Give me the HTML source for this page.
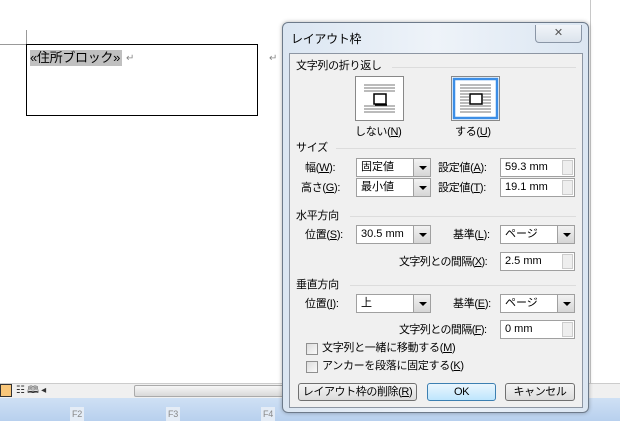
<!DOCTYPE html><html><head><meta charset="utf-8"><style>
*{margin:0;padding:0;box-sizing:border-box}
body{width:620px;height:421px;position:relative;overflow:hidden;background:#fff;font-family:"Liberation Sans","Noto Sans CJK JP",sans-serif;font-size:11px;color:#000}
.a{position:absolute;white-space:nowrap;line-height:14px;letter-spacing:-0.3px}
.l{position:absolute;height:1px;background:#dcdcdc}
.cb{position:absolute;height:19px;border:1px solid #a0a0a0;background:#fff;font-size:11px;line-height:17px;padding-left:4px;white-space:nowrap}
.dd{position:absolute;right:0;top:0;width:17px;height:17px;background:linear-gradient(#f2f2f2,#d6d6d6);border-left:1px solid #a0a0a0}
.dd:after{content:"";position:absolute;left:5px;top:7px;border:4px solid transparent;border-top:4px solid #000;border-bottom:0}
.sp{position:absolute;right:1px;top:1px;width:11px;height:15px;background:#eee;border:1px solid #ccc}
.btn{position:absolute;height:18px;border:1px solid #707070;border-radius:3px;background:linear-gradient(#f4f4f4,#dcdcdc);text-align:center;line-height:16px;font-size:11px;white-space:nowrap;letter-spacing:-0.4px}
.ck{position:absolute;width:12px;height:12px;border:1px solid #8f8f8f;background:linear-gradient(135deg,#ddd,#fafafa)}
u{text-decoration:underline}
</style></head><body>
<div style="position:absolute;left:0;top:44px;width:26px;height:1px;background:#999"></div>
<div style="position:absolute;left:26px;top:30px;width:1px;height:14px;background:#999"></div>
<div style="position:absolute;left:26px;top:44px;width:232px;height:72px;border:1px solid #000"></div>
<div class="a" style="left:30px;top:50px;background:#c0c0c0;font-size:13px;line-height:16px;padding-right:2px">«住所ブロック»</div>
<div class="a" style="left:126px;top:52px;color:#888;font-size:10px">↵</div>
<div class="a" style="left:269px;top:52px;color:#888;font-size:10px">↵</div>
<div style="position:absolute;left:590px;top:0;width:30px;height:383px;background:#fff;border-left:1px solid #c8c8c8"></div>
<div style="position:absolute;left:0;top:383px;width:620px;height:15px;background:#f0f0f0;border-top:1px solid #ccc"></div>
<div style="position:absolute;left:0;top:384px;width:12px;height:13px;background:#f9c77a;border:1px solid #333"></div>
<div class="a" style="left:16px;top:384px;font-size:10px;color:#333">☷ 🕮 ◂</div>
<div style="position:absolute;left:134px;top:385px;width:160px;height:12px;border:1px solid #aaa;border-radius:2px;background:linear-gradient(#f6f6f6,#d8d8d8)"></div>
<div style="position:absolute;left:0;top:398px;width:620px;height:23px;background:linear-gradient(#cfe0f4,#b8d0ee)"></div>
<div class="a" style="left:70px;top:407px;font-size:9px;color:#888;background:#e4ecf6;padding:0 2px">F2</div>
<div class="a" style="left:166px;top:407px;font-size:9px;color:#888;background:#e4ecf6;padding:0 2px">F3</div>
<div class="a" style="left:261px;top:407px;font-size:9px;color:#888;background:#e4ecf6;padding:0 2px">F4</div>
<div style="position:absolute;left:282px;top:22px;width:307px;height:391px;border:1px solid #6d7a8a;border-radius:6px;background:linear-gradient(90deg,#dbe6f2,#eef3f9 50%,#dbe6f2);box-shadow:0 0 4px rgba(0,0,0,.3)"></div>
<div class="a" style="left:291px;top:32px;font-size:12px">レイアウト枠</div>
<div style="position:absolute;left:535px;top:25px;width:47px;height:18px;border:1px solid #8a96a6;border-top:0;border-radius:0 0 4px 4px;background:linear-gradient(#f2f5f9,#dbe3ec);text-align:center;color:#555;font-size:11px;line-height:16px">✕</div>
<div style="position:absolute;left:289px;top:53px;width:294px;height:355px;background:#f0f0f0;border:1px solid #8d96a3"></div>
<div class="a" style="left:296px;top:59px">文字列の折り返し</div><div class="l" style="left:392px;top:67px;width:184px"></div>
<svg style="position:absolute;left:355px;top:76px" width="50" height="46"><rect x="0.5" y="0.5" width="48" height="44" fill="#fff" stroke="#888"/><g stroke="#777"><line x1="9" y1="9" x2="40" y2="9"/><line x1="9" y1="12" x2="40" y2="12"/><line x1="9" y1="15" x2="40" y2="15"/><line x1="9" y1="30" x2="40" y2="30"/><line x1="9" y1="33" x2="40" y2="33"/><line x1="9" y1="36" x2="40" y2="36"/></g><rect x="19" y="18" width="12" height="10" fill="#fff" stroke="#000" stroke-width="1.5"/><line x1="20" y1="29" x2="32" y2="29" stroke="#000" stroke-width="1.5"/></svg>
<svg style="position:absolute;left:451px;top:76px" width="50" height="46"><rect x="0.5" y="0.5" width="48" height="44" fill="#fff" stroke="#888"/><rect x="3" y="3" width="43" height="39" fill="none" stroke="#3c8ee6" stroke-width="2.5"/><g stroke="#777"><line x1="9" y1="9" x2="40" y2="9"/><line x1="9" y1="12" x2="40" y2="12"/><line x1="9" y1="15" x2="40" y2="15"/><line x1="9" y1="18" x2="18" y2="18"/><line x1="32" y1="18" x2="40" y2="18"/><line x1="9" y1="21" x2="18" y2="21"/><line x1="32" y1="21" x2="40" y2="21"/><line x1="9" y1="24" x2="18" y2="24"/><line x1="32" y1="24" x2="40" y2="24"/><line x1="9" y1="27" x2="18" y2="27"/><line x1="32" y1="27" x2="40" y2="27"/><line x1="9" y1="30" x2="40" y2="30"/><line x1="9" y1="33" x2="40" y2="33"/><line x1="9" y1="36" x2="40" y2="36"/></g><rect x="19" y="18" width="12" height="10" fill="#fff" stroke="#000" stroke-width="1.5"/></svg>
<div class="a" style="left:355px;top:125px">しない(<u>N</u>)</div>
<div class="a" style="left:455px;top:125px">する(<u>U</u>)</div>
<div class="a" style="left:296px;top:141px">サイズ</div><div class="l" style="left:336px;top:148px;width:240px"></div>
<div class="a" style="left:305px;top:161px">幅(<u>W</u>):</div>
<div class="cb" style="left:356px;top:158px;width:75px">固定値<div class="dd"></div></div>
<div class="a" style="left:438px;top:161px">設定値(<u>A</u>):</div>
<div class="cb" style="left:500px;top:158px;width:75px">59.3 mm<div class="sp"></div></div>
<div class="a" style="left:301px;top:181px">高さ(<u>G</u>):</div>
<div class="cb" style="left:356px;top:178px;width:75px">最小値<div class="dd"></div></div>
<div class="a" style="left:438px;top:181px">設定値(<u>T</u>):</div>
<div class="cb" style="left:500px;top:178px;width:75px">19.1 mm<div class="sp"></div></div>
<div class="a" style="left:296px;top:209px">水平方向</div><div class="l" style="left:350px;top:216px;width:226px"></div>
<div class="a" style="left:305px;top:228px">位置(<u>S</u>):</div>
<div class="cb" style="left:356px;top:225px;width:75px">30.5 mm<div class="dd"></div></div>
<div class="a" style="left:453px;top:228px">基準(<u>L</u>):</div>
<div class="cb" style="left:500px;top:225px;width:75px">ページ<div class="dd"></div></div>
<div class="a" style="left:399px;top:255px;letter-spacing:-0.6px">文字列との間隔(<u>X</u>):</div>
<div class="cb" style="left:500px;top:252px;width:75px">2.5 mm<div class="sp"></div></div>
<div class="a" style="left:296px;top:278px">垂直方向</div><div class="l" style="left:350px;top:285px;width:226px"></div>
<div class="a" style="left:305px;top:297px">位置(<u>I</u>):</div>
<div class="cb" style="left:356px;top:294px;width:75px">上<div class="dd"></div></div>
<div class="a" style="left:453px;top:297px">基準(<u>E</u>):</div>
<div class="cb" style="left:500px;top:294px;width:75px">ページ<div class="dd"></div></div>
<div class="a" style="left:399px;top:323px;letter-spacing:-0.6px">文字列との間隔(<u>F</u>):</div>
<div class="cb" style="left:500px;top:320px;width:75px">0 mm<div class="sp"></div></div>
<div class="ck" style="left:306px;top:343px"></div><div class="a" style="left:322px;top:341px">文字列と一緒に移動する(<u>M</u>)</div>
<div class="ck" style="left:306px;top:361px"></div><div class="a" style="left:322px;top:359px">アンカーを段落に固定する(<u>K</u>)</div>
<div class="btn" style="left:298px;top:383px;width:119px">レイアウト枠の削除(<u>R</u>)</div>
<div class="btn" style="left:427px;top:383px;width:69px;border-color:#3c7fb1;background:linear-gradient(#eaf6fd,#bee6fd)">OK</div>
<div class="btn" style="left:505px;top:383px;width:70px">キャンセル</div>
</body></html>
